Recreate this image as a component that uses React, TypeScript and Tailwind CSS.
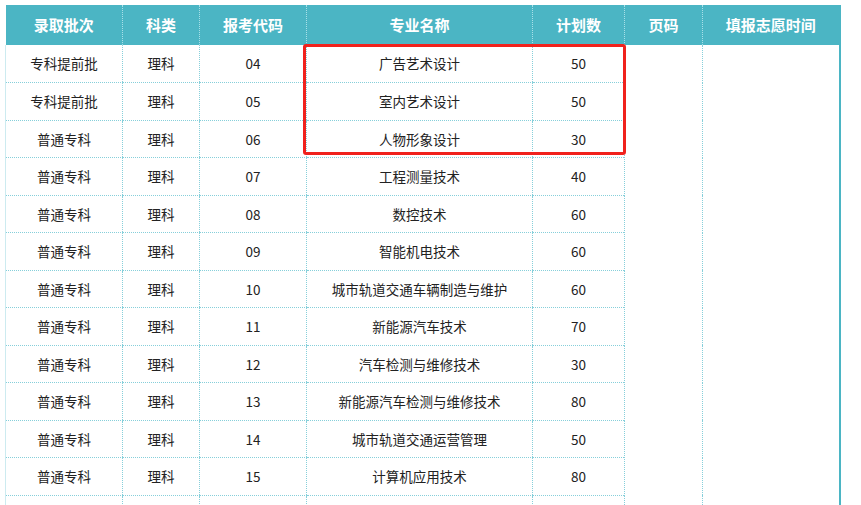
import React from "react";

const rows = [
  ["专科提前批", "理科", "04", "广告艺术设计", "50"],
  ["专科提前批", "理科", "05", "室内艺术设计", "50"],
  ["普通专科", "理科", "06", "人物形象设计", "30"],
  ["普通专科", "理科", "07", "工程测量技术", "40"],
  ["普通专科", "理科", "08", "数控技术", "60"],
  ["普通专科", "理科", "09", "智能机电技术", "60"],
  ["普通专科", "理科", "10", "城市轨道交通车辆制造与维护", "60"],
  ["普通专科", "理科", "11", "新能源汽车技术", "70"],
  ["普通专科", "理科", "12", "汽车检测与维修技术", "30"],
  ["普通专科", "理科", "13", "新能源汽车检测与维修技术", "80"],
  ["普通专科", "理科", "14", "城市轨道交通运营管理", "50"],
  ["普通专科", "理科", "15", "计算机应用技术", "80"],
  ["", "", "", "", ""],
];

const headers = ["录取批次", "科类", "报考代码", "专业名称", "计划数", "页码", "填报志愿时间"];
const widths = [117, 77, 107, 226, 92, 78, 137];

export default function App() {
  return (
    <div
      className="h-[505px] w-[861px] overflow-hidden bg-white pl-[5px] pt-[5px]"
      style={{ fontFamily: '"Microsoft YaHei", "Noto Sans CJK SC", "Noto Sans", sans-serif' }}
    >
      <div className="relative w-[834px]">
        <table className="w-[834px] table-fixed border-collapse">
          <colgroup>
            {widths.map((w, i) => (
              <col key={i} style={{ width: w }} />
            ))}
          </colgroup>
          <thead>
            <tr className="h-[40px] bg-[#4bb5c4]">
              {headers.map((h, i) => (
                <th
                  key={h}
                  className={`border-y-0 border-dotted border-[#a9e0e8] p-0 text-center text-[15px] font-bold text-white ${
                    i === 0 ? "border-l-0" : "border-l"
                  } ${i === 6 ? "border-r-2 border-r-[#4bb5c4] [border-right-style:solid]" : ""}`}
                >
                  {h}
                </th>
              ))}
            </tr>
          </thead>
          <tbody>
            {rows.map((r, ri) => (
              <tr key={ri} className="h-[37.5px]">
                {r.map((c, ci) => (
                  <td
                    key={ci}
                    className={`border-b border-dotted border-[#86cfda] p-0 text-center text-[13.5px] text-[#222] ${
                      ci === 0 ? "border-l border-l-[#cdebf0] [border-left-style:solid]" : "border-l"
                    }`}
                  >
                    {c}
                  </td>
                ))}
                {ri === 0 && (
                  <>
                    <td rowSpan={rows.length} className="border-l border-dotted border-[#86cfda] p-0" />
                    <td
                      rowSpan={rows.length}
                      className="border-l border-dotted border-[#86cfda] border-r-2 border-r-[#4bb5c4] p-0 [border-right-style:solid]"
                    />
                  </>
                )}
              </tr>
            ))}
          </tbody>
        </table>
        <div className="pointer-events-none absolute left-[298px] top-[39px] h-[111px] w-[323px] rounded-[3px] border-[3px] border-[#f0221d]" />
      </div>
    </div>
  );
}
